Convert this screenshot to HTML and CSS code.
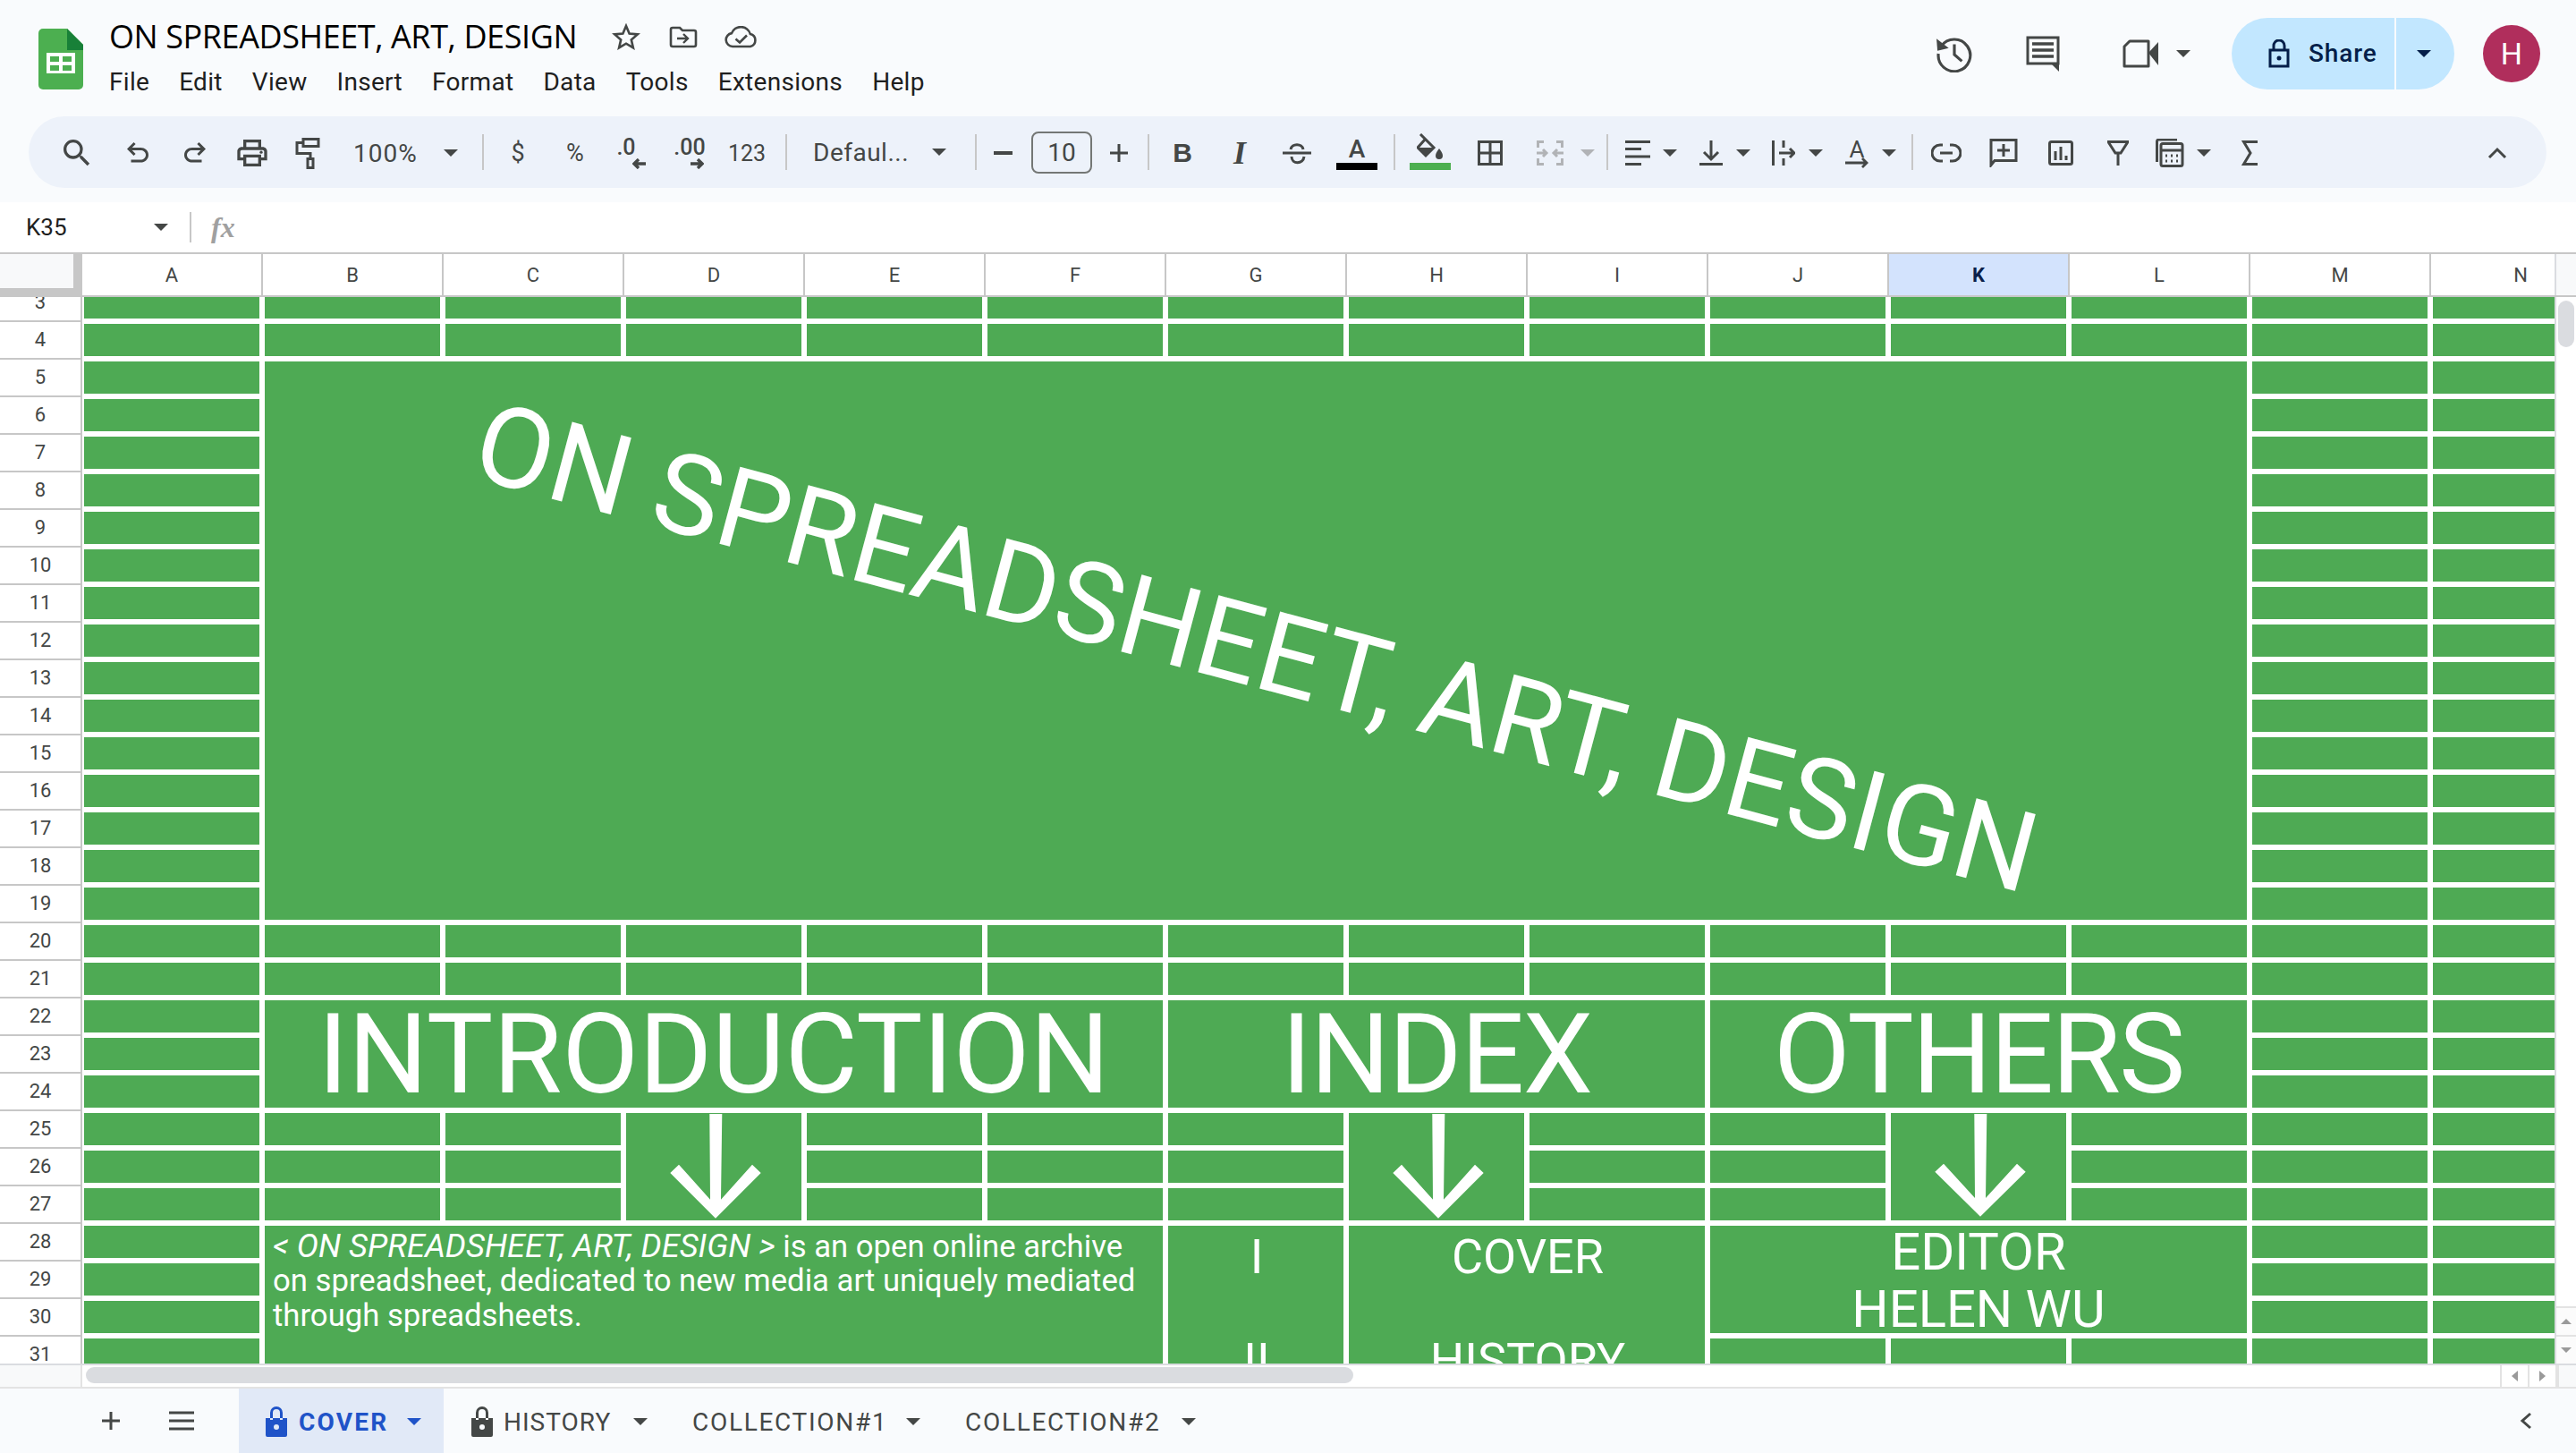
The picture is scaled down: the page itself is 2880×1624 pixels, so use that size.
FILE: index.html
```html
<!DOCTYPE html>
<html lang="en">
<head>
<meta charset="utf-8">
<title>ON SPREADSHEET, ART, DESIGN</title>
<link rel="stylesheet" href="styles.css">
</head>
<body>
<header class="top">
  <div class="titlebar">
    <svg class="logo" width="50" height="68" viewBox="0 0 50 68"><path fill="#4caf50" d="M5 0h27l18 18v45a5 5 0 0 1-5 5H5a5 5 0 0 1-5-5V5a5 5 0 0 1 5-5z"/><path fill="#188038" d="M32 0v24h18V18z"/><path fill="#fff" d="M9 27h32v23H9z"/><path fill="#4caf50" d="M13 31h10v6H13zM27 31h10v6H27zM13 41h10v6H13zM27 41h10v6H27z"/></svg>
    <div class="docinfo">
      <div class="docrow">
        <span class="doctitle">ON SPREADSHEET, ART, DESIGN</span>
        <svg class="star" width="32" height="30" viewBox="0 0 32 30"><path fill="none" stroke="#444746" stroke-width="2.6" d="M16 3l3.6 8.6 9.2.8-7 6 2.1 9L16 22.700l-7.900 4.700 2.100-9-7-6 9.200-.8z"/></svg>
        <svg class="folder" width="32" height="25" viewBox="0 0 32 25"><path fill="none" stroke="#444746" stroke-width="2.6" d="M2 4a2 2 0 0 1 2-2h8l3 3h13a2 2 0 0 1 2 2v14a2 2 0 0 1-2 2H4a2 2 0 0 1-2-2z"/><path fill="none" stroke="#444746" stroke-width="2.4" d="M9 14h12M16 9l5 5-5 5"/></svg>
        <svg class="cloud" width="37" height="25" viewBox="0 0 37 25"><path fill="none" stroke="#444746" stroke-width="2.6" d="M9 23a7.500 7.500 0 0 1-1-14.900A11 11 0 0 1 28.800 9 7.200 7.200 0 0 1 29 23z"/><path fill="none" stroke="#444746" stroke-width="2.600" d="M12.500 14.500l4.500 4 8-8"/></svg>
      </div>
      <nav class="menu"><span>File</span><span>Edit</span><span>View</span><span>Insert</span><span>Format</span><span>Data</span><span>Tools</span><span>Extensions</span><span>Help</span></nav>
    </div>
    <div class="actions">
      <svg class="history" width="42" height="42" viewBox="0 0 40 40"><path fill="none" stroke="#444746" stroke-width="3" d="M6 12A17 17 0 1 1 3 20"/><path fill="#444746" d="M1 4l1 13 12-3z"/><path fill="none" stroke="#444746" stroke-width="3" d="M20 10v11l8 7"/></svg>
      <svg class="comments" width="40" height="40" viewBox="0 0 40 40"><path fill="none" stroke="#444746" stroke-width="3" d="M3 2h34v29H3z"/><path fill="#444746" d="M29 31h9v9z"/><path fill="none" stroke="#444746" stroke-width="3.500" d="M8 9h24M8 16h24M8 23h24"/></svg>
      <svg class="video" width="42" height="32" viewBox="0 0 42 32"><path fill="none" stroke="#444746" stroke-width="3" stroke-linejoin="round" d="M9 2h21v28H3V8z"/><path fill="#444746" d="M30 15l11-12v26z"/></svg>
      <i class="caret caret-video"></i>
      <div class="share">
        <div class="share-main">
          <svg width="24" height="32" viewBox="0 0 24 32"><path fill="none" stroke="#041e49" stroke-width="3" d="M2 12h20v18H2zM6 12V7a6 6 0 0 1 12 0v5"/><circle cx="12" cy="21" r="2.500" fill="#041e49"/></svg>
          <span>Share</span>
        </div>
        <div class="share-drop"><i class="caret caret-dark"></i></div>
      </div>
      <div class="avatar">H</div>
    </div>
  </div>
  <div class="toolbar">
    <div class="tb"><svg width="40" height="40" viewBox="0 0 24 24"><path d="M15.500 14h-.79l-.28-.27A6.471 6.471 0 0 0 16 9.500 6.500 6.500 0 1 0 9.500 16c1.610 0 3.090-.59 4.230-1.570l.27.280v.79l5 4.990L20.490 19l-4.990-5zm-6 0C7.010 14 5 11.990 5 9.500S7.010 5 9.500 5 14 7.010 14 9.500 11.990 14 9.500 14z"/></svg></div>
    <div class="tb ml4"><svg width="36" height="36" viewBox="0 0 24 24"><path d="M7 19v-2h7.100c1.050 0 1.960-.33 2.730-1s1.170-1.500 1.170-2.500-.39-1.830-1.170-2.500S15.150 10 14.100 10H7.800l2.600 2.600L9 14 4 9l5-5 1.400 1.400L7.800 8h6.300c1.620 0 3 .53 4.170 1.580S20 11.950 20 13.500s-.58 2.870-1.730 3.920S15.720 19 14.100 19H7z"/></svg></div>
    <div class="tb"><svg width="36" height="36" viewBox="0 0 24 24"><g transform="matrix(-1 0 0 1 24 0)"><path d="M7 19v-2h7.100c1.050 0 1.960-.33 2.730-1s1.170-1.500 1.170-2.500-.39-1.830-1.170-2.500S15.150 10 14.100 10H7.800l2.600 2.600L9 14 4 9l5-5 1.400 1.400L7.800 8h6.300c1.620 0 3 .53 4.170 1.580S20 11.950 20 13.500s-.58 2.870-1.730 3.920S15.720 19 14.100 19H7z"/></g></svg></div>
    <div class="tb"><svg width="40" height="40" viewBox="0 0 24 24"><path d="M19 8h-1V3H6v5H5c-1.660 0-3 1.340-3 3v6h4v4h12v-4h4v-6c0-1.660-1.340-3-3-3zM8 5h8v3H8V5zm8 12v2H8v-4h8v2zm2-2v-2H6v2H4v-4c0-.55.45-1 1-1h14c.55 0 1 .45 1 1v4h-2z"/><circle cx="18" cy="11.500" r="1"/></svg></div>
    <div class="tb w60"><svg width="28" height="36" viewBox="0 0 28 36"><path class="st" d="M9 2.500h17v8H9zM9 6.500H2v12h15V24"/><path class="st" d="M14 24.500h6v10h-6z"/></svg></div>
    <div class="zoomsel"><span>100%</span><i class="caret"></i></div>
    <i class="sep"></i>
    <div class="tb tx ml6">$</div>
    <div class="tb tx">%</div>
    <div class="tb dec dec-less"><span>.0</span><svg width="16" height="12" viewBox="0 0 16 12"><path class="st3" d="M15 6H2M7 1L2 6l5 5"/></svg></div>
    <div class="tb dec dec-more"><span>.00</span><svg width="16" height="12" viewBox="0 0 16 12"><path class="st3" d="M1 6h13M9 1l5 5-5 5"/></svg></div>
    <div class="tb tx small">123</div>
    <i class="sep ml11"></i>
    <div class="fontsel"><span>Defaul...</span><i class="caret"></i></div>
    <i class="sep"></i>
    <div class="tb w58"><i class="minus"></i></div>
    <div class="sizebox">10</div>
    <div class="tb w60"><svg width="22" height="22" viewBox="0 0 22 22"><path class="st" d="M11 1v20M1 11h20"/></svg></div>
    <i class="sep ml2"></i>
    <div class="tb ml5 bold">B</div>
    <div class="tb ital">I</div>
    <div class="tb"><svg width="32" height="26" viewBox="0 0 32 26"><path class="st" d="M0 13h32M9 9C10 2 22 2 23 9M10 17c0 9 13 9 14 0"/></svg></div>
    <div class="tb ml3 colorbtn"><span>A</span><i class="bar bar-black"></i></div>
    <i class="sep ml9"></i>
    <div class="tb ml7 colorbtn"><svg width="30" height="29" viewBox="0 0 30 29"><path class="st" d="M4 1L19 16 10 25 1 16 9 7"/><path fill="#444746" d="M1 16h18l-9 9z"/><path fill="#444746" d="M25 17c2 3 4 5 4 8a4 4 0 0 1-8 0c0-3 2-5 4-8z"/></svg><i class="bar bar-green"></i></div>
    <div class="tb ml3"><svg width="28" height="28" viewBox="0 0 28 28"><path class="st" d="M1.500 1.500h25v25h-25zM14 1.500v25M1.500 14h25"/></svg></div>
    <div class="tb w48 ml11"><svg width="30" height="28" viewBox="0 0 30 28"><path fill="none" stroke="#b1b3b6" stroke-width="3" d="M8 1.500H1.500V8M22 1.500h6.500V8M8 26.500H1.500V20M22 26.500h6.500V20M0 14h11M7 10l4 4-4 4M30 14H19M23 10l-4 4 4 4"/></svg></div>
    <div class="tb w33 ml1"><i class="caret caret-off"></i></div>
    <i class="sep ml5"></i>
    <div class="tb w44 ml11"><svg width="28" height="28" viewBox="0 0 28 28"><path class="st" d="M0 1.500h28M0 9.500h18M0 18h28M0 26.500h18"/></svg></div>
    <div class="tb w28"><i class="caret"></i></div>
    <div class="tb w44 ml10"><svg width="26" height="28" viewBox="0 0 26 28"><path class="st" d="M13 0v21M5 13l8 8 8-8M0 26.500h26"/></svg></div>
    <div class="tb w28"><i class="caret"></i></div>
    <div class="tb w44 ml9"><svg width="26" height="28" viewBox="0 0 26 28"><path class="st" d="M1.500 0v28M13 0v8M13 20v8M8 14h17M20 9l5 5-5 5"/></svg></div>
    <div class="tb w28"><i class="caret"></i></div>
    <div class="tb w44 ml10 rot"><span>A</span><svg width="26" height="12" viewBox="0 0 26 12"><path class="st2" d="M0 6h24M19 1l5 5-5 5"/></svg></div>
    <div class="tb w28"><i class="caret"></i></div>
    <i class="sep ml11"></i>
    <div class="tb ml5"><svg width="34" height="22" viewBox="0 0 34 22"><path class="st" d="M13 2H10a9 9 0 0 0 0 18h3M21 2h3a9 9 0 0 1 0 18h-3M10 11h14"/></svg></div>
    <div class="tb"><svg width="32" height="32" viewBox="0 0 32 32"><path class="st" d="M2 1.500h28v23H6l-4 5zM16 6v14M9 13h14"/></svg></div>
    <div class="tb"><svg width="28" height="28" viewBox="0 0 28 28"><rect class="st" x="1.500" y="1.500" width="25" height="25" rx="2"/><path class="st" d="M8 22V12M14 22V7M20 22v-5"/></svg></div>
    <div class="tb"><svg width="24" height="28" viewBox="0 0 24 28"><path class="st" d="M1 1.500h22L15 14 12 14 9 14zM12 14v14"/></svg></div>
    <div class="tb w52"><svg width="32" height="32" viewBox="0 0 32 32"><path class="st" d="M1.500 26V3a2 2 0 0 1 2-2H24"/><rect class="st" x="6" y="5.500" width="24" height="25" rx="2"/><path class="st" d="M6 13h24M11 19h2M17 19h2M23 19h2M11 25h2M17 25h2M23 25h2"/></svg></div>
    <div class="tb w24"><i class="caret"></i></div>
    <div class="tb ml7"><svg width="18" height="28" viewBox="0 0 18 28"><path class="st" d="M18 1.500H2.500L10 14 2.500 26.500H18"/></svg></div>
    <div class="tb chev"><svg width="22" height="14" viewBox="0 0 22 14"><path class="st" d="M2 12l9-9 9 9"/></svg></div>
  </div>
</header>

<div class="fbar">
  <span class="namebox">K35</span>
  <i class="caret"></i>
  <i class="fsep"></i>
  <span class="fx">fx</span>
</div>

<div class="colhead">
  <div class="corner"></div>
  <div class="ch">A</div><div class="ch">B</div><div class="ch">C</div><div class="ch">D</div><div class="ch">E</div><div class="ch">F</div><div class="ch">G</div><div class="ch">H</div><div class="ch">I</div><div class="ch">J</div><div class="ch active">K</div><div class="ch">L</div><div class="ch">M</div><div class="ch last">N</div>
  <div class="chend"></div>
</div>

<main class="sheet">
  <div class="rowhead"><div class="rowlist">
    <div>3</div><div>4</div><div>5</div><div>6</div><div>7</div><div>8</div><div>9</div><div>10</div><div>11</div><div>12</div><div>13</div><div>14</div><div>15</div><div>16</div><div>17</div><div>18</div><div>19</div><div>20</div><div>21</div><div>22</div><div>23</div><div>24</div><div>25</div><div>26</div><div>27</div><div>28</div><div>29</div><div>30</div><div>31</div>
  </div></div>
  <div class="gridwrap">
    <div class="grid">
      <div class="m m-title"><span>ON SPREADSHEET, ART, DESIGN</span></div>
      <div class="m m-intro big">INTRODUCTION</div>
      <div class="m m-index big">INDEX</div>
      <div class="m m-others big">OTHERS</div>
      <div class="m m-ad arrow"><svg width="102" height="117" viewBox="0 0 102 117"><path fill="#fff" d="M44.300 0H58.300L57 95.700 92 56.700 101.700 66 51 116.700.3 66 10 56.700 45 95.700z"/></svg></div>
      <div class="m m-ah arrow"><svg width="102" height="117" viewBox="0 0 102 117"><path fill="#fff" d="M44.300 0H58.300L57 95.700 92 56.700 101.700 66 51 116.700.3 66 10 56.700 45 95.700z"/></svg></div>
      <div class="m m-ak arrow"><svg width="102" height="115" viewBox="0 0 102 117" preserveAspectRatio="none"><path fill="#fff" d="M44.300 0H58.300L57 95.700 92 56.700 101.700 66 51 116.700.3 66 10 56.700 45 95.700z"/></svg></div>
      <div class="m m-text"><em>&lt; ON SPREADSHEET, ART, DESIGN &gt;</em> is an open online archive on spreadsheet, dedicated to new media art uniquely mediated through spreadsheets.</div>
      <div class="m m-num list">I<br><br>II</div>
      <div class="m m-cover list">COVER<br><br>HISTORY</div>
      <div class="m m-editor">EDITOR<br>HELEN WU</div>
      <!-- row 3 --><i></i><i></i><i></i><i></i><i></i><i></i><i></i><i></i><i></i><i></i><i></i><i></i><i></i><i></i>
      <!-- row 4 --><i></i><i></i><i></i><i></i><i></i><i></i><i></i><i></i><i></i><i></i><i></i><i></i><i></i><i></i>
      <!-- rows 5-19 --><i></i><i></i><i></i><i></i><i></i><i></i><i></i><i></i><i></i><i></i><i></i><i></i><i></i><i></i><i></i><i></i><i></i><i></i><i></i><i></i><i></i><i></i><i></i><i></i><i></i><i></i><i></i><i></i><i></i><i></i><i></i><i></i><i></i><i></i><i></i><i></i><i></i><i></i><i></i><i></i><i></i><i></i><i></i><i></i><i></i>
      <!-- row 20 --><i></i><i></i><i></i><i></i><i></i><i></i><i></i><i></i><i></i><i></i><i></i><i></i><i></i><i></i>
      <!-- row 21 --><i></i><i></i><i></i><i></i><i></i><i></i><i></i><i></i><i></i><i></i><i></i><i></i><i></i><i></i>
      <!-- rows 22-24 --><i></i><i></i><i></i><i></i><i></i><i></i><i></i><i></i><i></i>
      <!-- rows 25-27 --><i></i><i></i><i></i><i></i><i></i><i></i><i></i><i></i><i></i><i></i><i></i><i></i><i></i><i></i><i></i><i></i><i></i><i></i><i></i><i></i><i></i><i></i><i></i><i></i><i></i><i></i><i></i><i></i><i></i><i></i><i></i><i></i><i></i>
      <!-- rows 28-30 --><i></i><i></i><i></i><i></i><i></i><i></i><i></i><i></i><i></i>
      <!-- row 31 --><i></i><i></i><i></i><i></i><i></i><i></i>
    </div>
  </div>
  <div class="vscroll">
    <div class="vthumb"></div>
    <div class="vbtns">
      <div class="sbtn"><i class="tri tri-up"></i></div>
      <div class="sbtn"><i class="tri tri-down"></i></div>
    </div>
  </div>
</main>

<div class="hscroll">
  <div class="hcorner"></div>
  <div class="htrack"><div class="hthumb"></div></div>
  <div class="hbtn"><i class="tri tri-left"></i></div>
  <div class="hbtn"><i class="tri tri-right"></i></div>
  <div class="hend"></div>
</div>

<footer class="tabs">
  <svg class="addsheet" width="22" height="22" viewBox="0 0 22 22"><path class="st" d="M11 1v20M1 11h20"/></svg>
  <svg class="allsheets" width="28" height="22" viewBox="0 0 28 22"><path class="st" d="M0 2h28M0 11h28M0 20h28"/></svg>
  <div class="tab tab-on">
    <svg width="24" height="34" viewBox="0 0 24 34"><path class="lock-on" d="M5 15V7a7 7 0 0 1 14 0v8h-3V7a4 4 0 0 0-8 0v8zM0 13h24v19a2 2 0 0 1-2 2H2a2 2 0 0 1-2-2zM12 20a3 3 0 1 0 0 6 3 3 0 0 0 0-6z" fill-rule="evenodd"/></svg>
    <span>COVER</span><i class="caret caret-blue"></i>
  </div>
  <div class="tab tab-hist">
    <svg width="24" height="34" viewBox="0 0 24 34"><path d="M5 15V7a7 7 0 0 1 14 0v8h-3V7a4 4 0 0 0-8 0v8zM0 13h24v19a2 2 0 0 1-2 2H2a2 2 0 0 1-2-2zM12 20a3 3 0 1 0 0 6 3 3 0 0 0 0-6z" fill-rule="evenodd"/></svg>
    <span>HISTORY</span><i class="caret"></i>
  </div>
  <div class="tab tab-c1"><span>COLLECTION#1</span><i class="caret"></i></div>
  <div class="tab tab-c2"><span>COLLECTION#2</span><i class="caret"></i></div>
  <svg class="collapse" width="14" height="20" viewBox="0 0 14 20"><path class="st" d="M12 2L3 10l9 8"/></svg>
</footer>
</body>
</html>
```

FILE: styles.css
```css
* { box-sizing: border-box; }
html, body { margin: 0; padding: 0; }
body { width: 2880px; height: 1624px; overflow: hidden; background: #fff; font-family: Roboto, "Liberation Sans", sans-serif; color: #1f1f1f; }
svg { display: block; fill: #444746; flex: none; }
i { display: block; font-style: normal; }
.st { fill: none; stroke: #444746; stroke-width: 3; }
.st2 { fill: none; stroke: #444746; stroke-width: 2.8; }
.st3 { fill: none; stroke: #444746; stroke-width: 3.4; }
.caret { width: 0; height: 0; border-left: 8px solid transparent; border-right: 8px solid transparent; border-top: 8px solid #444746; flex: none; }
.caret-dark { border-top-color: #041e49; }
.caret-off { border-top-color: #b1b3b6; }
.caret-blue { border-top-color: #1f53c8; }

/* header */
.top { height: 226px; background: #f9fbfd; }
.titlebar { height: 130px; display: flex; position: relative; padding-left: 43px; }
.logo { margin-top: 32px; }
.docinfo { margin-left: 29px; }
.docrow { display: flex; align-items: center; height: 40px; margin-top: 21px; }
.doctitle { font-family: "Open Sans", sans-serif; font-size: 36px; letter-spacing: -0.42px; line-height: 40px; color: #000; width: 562px; white-space: nowrap; }
.folder { margin-left: 32px; }
.cloud { margin-left: 30px; }
.menu { display: flex; gap: 33px; margin-top: 11px; font-size: 28px; letter-spacing: 0.3px; line-height: 40px; color: #1f1f1f; }
.actions { display: flex; align-items: center; margin-left: auto; padding-right: 40px; height: 120px; }
.history { margin-right: 56px; }
.comments { margin-right: 68px; margin-left: 2px; }
.caret-video { margin-left: 19px; margin-right: 46px; }
.share { width: 249px; height: 80px; border-radius: 40px; background: #c2e7ff; display: flex; overflow: hidden; color: #041e49; margin-right: 32px; }
.share-main { width: 182px; display: flex; align-items: center; padding-left: 41px; gap: 21px; font-size: 28px; font-weight: 500; letter-spacing: 0.9px; }
.share-main span { margin-top: -2px; }
.share-drop { flex: 1; border-left: 2px solid #f9fbfd; display: flex; align-items: center; justify-content: center; padding-right: 4px; }
.avatar { width: 64px; height: 64px; border-radius: 50%; background: #b02e5c; color: #fff; font-size: 34px; display: flex; align-items: center; justify-content: center; }

/* toolbar */
.toolbar { margin: 0 33px 0 32px; height: 80px; border-radius: 40px; background: #edf2fa; display: flex; align-items: center; padding: 0 23px 0 22px; }
.tb { width: 64px; height: 80px; padding-top: 2px; display: flex; align-items: center; justify-content: center; flex: none; position: relative; color: #444746; }
.w24 { width: 24px; } .w28 { width: 28px; } .w33 { width: 33px; } .w44 { width: 44px; } .w48 { width: 48px; } .w52 { width: 52px; } .w58 { width: 58px; } .w60 { width: 60px; }
.ml1 { margin-left: 1px; } .ml2 { margin-left: 2px; } .ml3 { margin-left: 3px; } .ml4 { margin-left: 4px; } .ml5 { margin-left: 5px; } .ml6 { margin-left: 6px; } .ml7 { margin-left: 7px; } .ml9 { margin-left: 9px; } .ml10 { margin-left: 10px; } .ml11 { margin-left: 11px; }
.sep { width: 2px; height: 40px; background: #c7c7c7; flex: none; }
.tx { font-size: 27px; }
.small { font-size: 25px; }
.zoomsel { width: 165px; padding: 2px 0 0 21px; display: flex; align-items: center; font-size: 28px; letter-spacing: 1px; color: #444746; flex: none; }
.zoomsel span { width: 101px; }
.fontsel { width: 210px; padding-left: 29px; display: flex; align-items: center; font-size: 28px; letter-spacing: 0.5px; color: #444746; flex: none; }
.fontsel span { width: 133px; white-space: nowrap; }
.dec { flex-direction: column; font-size: 25px; font-weight: 500; line-height: 24px; align-items: center; justify-content: flex-start; padding-top: 23px; }
.dec-less span { transform: translateX(-7px); }
.dec-less svg { transform: translateX(8px); }
.dec-more svg { transform: translateX(8px); }
.minus { width: 21px; height: 4px; background: #444746; }
.sizebox { width: 68px; height: 47px; margin-left: 3px; border: 2px solid #747775; border-radius: 8px; font-size: 28px; color: #444746; display: flex; align-items: center; justify-content: center; flex: none; }
.bold { font-family: "Liberation Sans", sans-serif; font-weight: 700; font-size: 30px; }
.ital { font-family: "Liberation Serif", serif; font-weight: 700; font-style: italic; font-size: 36px; }
.colorbtn { flex-direction: column; justify-content: flex-start; font-size: 28px; font-weight: 500; line-height: 30px; padding-top: 0; }
.colorbtn span { margin-top: 22px; height: 30px; }
.colorbtn svg { margin-top: 19px; }
.bar { width: 46px; height: 8px; margin-top: 4px; flex: none; }
.bar-black { background: #000; margin-top: 0; }
.bar-green { background: #4caf50; }
.rot { flex-direction: column; font-size: 26px; line-height: 26px; }
.rot span { height: 22px; }
.chev { margin-left: auto; }

/* formula bar */
.fbar { height: 56px; display: flex; align-items: center; padding-left: 29px; background: #fff; }
.namebox { width: 143px; font-size: 26px; color: #1f1f1f; }
.fsep { width: 2px; height: 34px; background: #c7c7c7; margin-left: 24px; }
.fx { margin-left: 22px; font-family: "Liberation Serif", serif; font-style: italic; font-weight: 700; font-size: 32px; color: #a0a0a0; }

/* column header */
.colhead { height: 50px; border-top: 2px solid #c7c7c7; border-bottom: 2px solid #c7c7c7; display: flex; font-size: 22px; color: #444746; }
.corner { width: 92px; background: #f8f9fa; border-right: 10px solid #c7c7c7; border-bottom: 8px solid #c7c7c7; }
.ch { width: 202px; border-right: 2px solid #c7c7c7; display: flex; align-items: center; justify-content: center; }
.ch.active { background: #d3e3fd; color: #0b1f4a; font-weight: 700; }
.ch.last { width: 140px; padding-left: 62px; border-right: 2px solid #dadce0; }
.chend { flex: 1; background: #f8f9fa; }

/* sheet */
.sheet { height: 1192px; display: flex; overflow: hidden; }
.rowhead { width: 92px; border-right: 2px solid #c7c7c7; overflow: hidden; flex: none; font-size: 22px; color: #444746; }
.rowlist { margin-top: -14px; }
.rowlist div { height: 42px; padding-bottom: 2px; border-bottom: 2px solid #c7c7c7; display: flex; align-items: center; justify-content: center; }
.gridwrap { width: 2764px; flex: none; overflow: hidden; padding-left: 2px; }
.grid { display: grid; grid-template-columns: repeat(13, 196px) 136px; grid-template-rows: 24px repeat(28, 36px); gap: 6px; color: #fff; }
.grid i, .m { background: #4eaa54; }
.m { overflow: hidden; display: flex; align-items: center; justify-content: center; min-width: 0; min-height: 0; }
.m-title { grid-column: 2 / 13; grid-row: 3 / 18; font-size: 125px; white-space: nowrap; }
.m-title span { transform: translateY(8px) rotate(15deg); display: block; }
.big { font-size: 125px; white-space: nowrap; }
.m-intro { grid-column: 2 / 7; grid-row: 20 / 23; }
.m-index { grid-column: 7 / 10; grid-row: 20 / 23; letter-spacing: -1.5px; }
.m-others { grid-column: 10 / 13; grid-row: 20 / 23; letter-spacing: -2px; }
.arrow { align-items: flex-start; padding: 1px 0 0 4px; }
.m-ad { grid-column: 4 / 5; grid-row: 23 / 26; }
.m-ah { grid-column: 8 / 9; grid-row: 23 / 26; }
.m-ak { grid-column: 11 / 12; grid-row: 23 / 26; }
.m-text { grid-column: 2 / 7; grid-row: 26 / 30; display: block; padding: 4px 30px 0 9px; font-size: 34.7px; line-height: 38.3px; }
.m-text em { font-size: 36.3px; }
.list { font-size: 54px; line-height: 58px; text-align: center; align-items: flex-start; padding: 6px 0 0 2px; }
.m-num { grid-column: 7 / 8; grid-row: 26 / 30; }
.m-cover { grid-column: 8 / 10; grid-row: 26 / 30; }
.m-editor { grid-column: 10 / 13; grid-row: 26 / 29; font-size: 58px; line-height: 64px; text-align: center; padding-top: 2px; }

/* scrollbars */
.vscroll { flex: 1; border-left: 2px solid #dadce0; display: flex; flex-direction: column; justify-content: space-between; background: #fff; }
.vthumb { width: 18px; height: 52px; margin: 4px 0 0 2px; border-radius: 9px; background: #dadce0; }
.sbtn { height: 32px; border-top: 2px solid #e3e3e3; display: flex; align-items: center; justify-content: center; background: #fbfbfb; }
.tri { width: 0; height: 0; }
.tri-up { border-left: 6px solid transparent; border-right: 6px solid transparent; border-bottom: 6px solid #9a9a9a; }
.tri-down { border-left: 6px solid transparent; border-right: 6px solid transparent; border-top: 6px solid #9a9a9a; }
.tri-left { border-top: 6px solid transparent; border-bottom: 6px solid transparent; border-right: 7px solid #9a9a9a; }
.tri-right { border-top: 6px solid transparent; border-bottom: 6px solid transparent; border-left: 7px solid #9a9a9a; }
.hscroll { height: 28px; border-top: 2px solid #dadce0; border-bottom: 2px solid #e3e3e3; display: flex; }
.hcorner { width: 92px; background: #f8f9fa; border-right: 2px solid #e3e3e3; }
.htrack { width: 2703px; padding: 2px 0 4px 4px; }
.hthumb { width: 1417px; height: 18px; border-radius: 9px; background: #dadce0; }
.hbtn { width: 31px; border-left: 2px solid #e3e3e3; display: flex; align-items: center; justify-content: center; }
.hend { flex: 1; border-left: 4px solid #e3e3e3; background: #f8f9fa; }

/* tabs */
.tabs { height: 72px; background: #f9fbfd; display: flex; align-items: center; padding-left: 113px; position: relative; font-size: 28px; color: #444746; }
.allsheets { margin-left: 54px; }
.tab { height: 72px; padding-top: 2px; display: flex; align-items: center; flex: none; }
.tab-on { width: 229px; margin-left: 50px; padding-left: 30px; background: #e1e9f7; color: #1f53c8; font-weight: 700; gap: 13px; letter-spacing: 2.2px; }
.tab-on span { width: 108px; }
.lock-on { fill: #1f53c8; }
.tab-hist { margin-left: 31px; gap: 12px; letter-spacing: 1px; }
.tab-hist span { width: 133px; }
.tab-c1 { margin-left: 50px; letter-spacing: 1.7px; }
.tab-c1 span { width: 239px; }
.tab-c2 { margin-left: 50px; letter-spacing: 1.7px; }
.tab-c2 span { width: 242px; }
.collapse { margin-left: auto; margin-right: 49px; }
```
